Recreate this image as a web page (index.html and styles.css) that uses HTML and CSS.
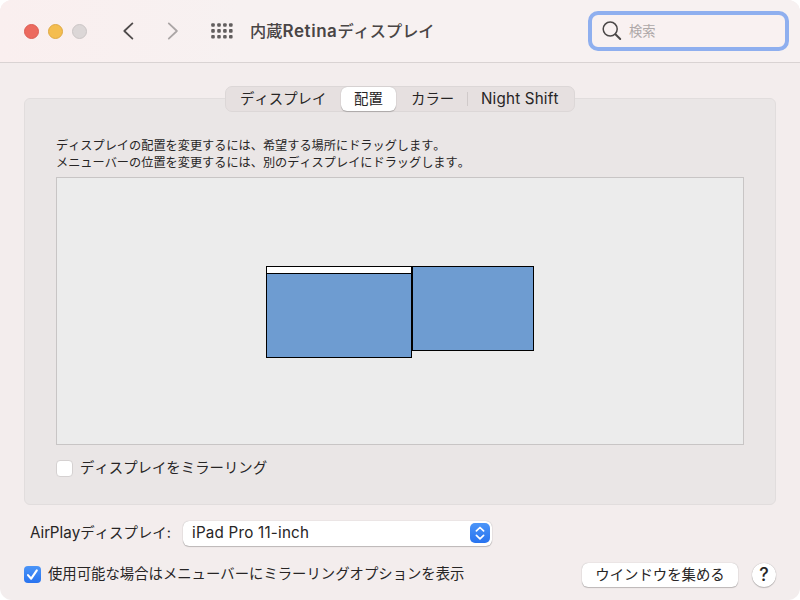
FILE: index.html
```html
<!DOCTYPE html>
<html lang="ja">
<head>
<meta charset="utf-8">
<title>内蔵Retinaディスプレイ</title>
<link rel="stylesheet" href="styles.css">
</head>
<body>
<div class="window">
  <header class="titlebar">
    <div class="lights"><i class="light red"></i><i class="light yellow"></i><i class="light gray"></i></div>
    <svg class="nav" width="60" height="22" viewBox="0 0 60 22" fill="none" stroke-width="1.8" stroke-linecap="round" stroke-linejoin="round"><path d="M10.4 3.4 L2.3 11 L10.4 18.6" stroke="#504c4c"/><path d="M46.8 3.4 L54.9 11 L46.8 18.6" stroke="#aba6a6"/></svg>
    <svg class="grid" width="22" height="16" viewBox="0 0 22 16" fill="#625e5e">
      <g id="row"><rect x="0.2" y="0.2" width="3.6" height="3.6" rx="1"/><rect x="6.2" y="0.2" width="3.6" height="3.6" rx="1"/><rect x="12.1" y="0.2" width="3.6" height="3.6" rx="1"/><rect x="18" y="0.2" width="3.6" height="3.6" rx="1"/></g>
      <use href="#row" y="5.9"/><use href="#row" y="11.8"/>
    </svg>
    <h1 class="title">内蔵<span class="latin">Retina</span>ディスプレイ</h1>
    <div class="search">
      <svg width="20" height="20" viewBox="0 0 20 20" fill="none" stroke="#4b4747" stroke-linecap="round"><circle cx="8.2" cy="8.1" r="7" stroke-width="1.5"/><path d="M13.4 13.3 L18.2 18" stroke-width="2"/></svg>
      <span>検索</span>
    </div>
  </header>

  <main class="content">
    <section class="panel">
      <nav class="tabs">
        <span class="tab first">ディスプレイ</span>
        <span class="tab active">配置</span>
        <span class="tab color">カラー</span>
        <i class="divider"></i>
        <span class="tab night">Night Shift</span>
      </nav>
      <p class="help">ディスプレイの配置を変更するには、希望する場所にドラッグします。<br>メニューバーの位置を変更するには、別のディスプレイにドラッグします。</p>
      <div class="arrangement">
        <div class="display main"><i class="menubar"></i></div>
        <div class="display second"></div>
      </div>
      <label class="check mirror"><i class="box"></i><span>ディスプレイをミラーリング</span></label>
    </section>

    <div class="airplay">
      <span class="airplay-label"><span class="latin">AirPlay</span>ディスプレイ:</span>
      <div class="select"><span class="value">iPad Pro 11-inch</span>
        <svg width="20" height="20" viewBox="0 0 20 20"><defs><linearGradient id="blue" x2="0" y2="1"><stop stop-color="#4b95f8"/><stop offset="1" stop-color="#2873ef"/></linearGradient></defs><rect width="20" height="20" rx="5" fill="url(#blue)"/><path d="M6.4 7.9 L10 4.5 L13.6 7.9 M6.4 12.4 L10 15.8 L13.6 12.4" fill="none" stroke="#fff" stroke-width="1.7" stroke-linecap="round" stroke-linejoin="round"/></svg>
      </div>
    </div>

    <footer class="footer">
      <label class="check option"><svg class="checked" width="17" height="17" viewBox="0 0 17 17"><rect width="17" height="17" rx="4" fill="url(#blue)"/><path d="M4 9.1 L7.2 12.7 L12.8 4.4" fill="none" stroke="#fff" stroke-width="2.1" stroke-linecap="round" stroke-linejoin="round"/></svg><span>使用可能な場合はメニューバーにミラーリングオプションを表示</span></label>
      <span class="button">ウインドウを集める</span>
      <span class="button help-button">?</span>
    </footer>
  </main>
</div>
</body>
</html>
```
FILE: styles.css
```css
* { box-sizing: border-box; }
body {
  margin: 0;
  background: #fff;
  color: #272525;
  font: 14.4px/20px Inter, "Noto Sans CJK JP", sans-serif;
  font-kerning: none;
  white-space: nowrap;
}
i { display: block; }
svg { display: block; flex: none; }
.window {
  width: 800px;
  height: 600px;
  border-radius: 12px;
  background: #f3eded;
  overflow: hidden;
}
.titlebar {
  display: flex;
  align-items: center;
  height: 63px;
  padding: 1px 11px 1px 23.5px;
  background: linear-gradient(90deg, #faefef, #f7f1f1 30%);
  border-bottom: 1px solid #d9d3d3;
}
.lights { display: flex; gap: 9px; }
.light { width: 15px; height: 15px; border-radius: 50%; border: 1px solid; }
.red { background: #ec6a5f; border-color: #dc5d54; }
.yellow { background: #f4bd4f; border-color: #dfa944; }
.gray { background: #dcd7d7; border-color: #cbc6c6; }
.nav { margin-left: 35px; }
.grid { margin-left: 29.5px; }
.title {
  margin: 0 0 0 17px;
  font-size: 16.2px;
  line-height: 24px;
  font-weight: 500;
  color: #494545;
}
.title .latin { font-size: 17px; font-weight: 600; letter-spacing: 0.55px; }
.search {
  display: flex;
  align-items: center;
  gap: 7px;
  width: 201px;
  height: 40px;
  margin-left: auto;
  padding-left: 10px;
  border: 4px solid #8fafef;
  border-radius: 10px;
  background: #f9f1f1;
  color: #aea8a8;
  font-size: 13.3px;
}
.content { padding: 35px 24px 0; }
.panel {
  display: flex;
  flex-direction: column;
  height: 407px;
  padding: 0 31px;
  background: #eae6e6;
  border: 1px solid #e1dddd;
  border-radius: 6px;
}
.tabs {
  display: flex;
  align-items: center;
  align-self: center;
  width: 350px;
  height: 26px;
  margin-top: -13px;
  background: #e6e0e0;
  border: 1px solid #dcd7d7;
  border-radius: 7px;
}
.first { width: 115px; padding-left: 14px; }
.active {
  width: 55px;
  height: 24px;
  line-height: 23px;
  text-align: center;
  background: #fff;
  border-radius: 6px;
  box-shadow: 0 0 1px #0004, 0 1px 1px #0003;
}
.color { margin-left: 15px; width: 56px; }
.divider { width: 1px; height: 14px; background: #d0caca; }
.night { margin-left: 13px; font-size: 15.2px; letter-spacing: 0.18px; }
.help { margin: 25px 0 0; font-size: 12.18px; line-height: 17px; }
.arrangement {
  display: flex;
  align-items: flex-start;
  height: 268px;
  margin-top: 6px;
  padding: 88px 0 0 209px;
  background: #ececec;
  border: 1px solid #c8c5c5;
}
.display { background: #6e9cd1; border: 1px solid #000; }
.main { width: 146px; height: 92px; }
.second { width: 122px; height: 85px; }
.menubar { height: 7px; background: #fff; border-bottom: 1px solid #000; }
.check { display: flex; align-items: center; gap: 7px; }
.mirror { margin-top: 13px; }
.box {
  width: 17px;
  height: 17px;
  background: #fff;
  border: 1px solid #d5d1d1;
  border-radius: 4px;
}
.airplay { display: flex; align-items: center; height: 26px; margin: 15px 0 0 6px; }
.airplay-label { width: 153px; }
.airplay .latin { font-size: 15.2px; }
.value { font-size: 15.2px; letter-spacing: 0.2px; }
.select {
  display: flex;
  align-items: center;
  justify-content: space-between;
  width: 309px;
  height: 25px;
  padding: 0 2px 0 9px;
  background: #fff;
  border-radius: 6px;
  box-shadow: 0 0 1px #0005, 0 1px 1px #0003;
}
.footer { display: flex; align-items: center; height: 26px; margin-top: 16px; }
.option { font-size: 14.37px; margin-bottom: 2px; }
.button {
  width: 156px;
  height: 24px;
  line-height: 23px;
  margin-left: auto;
  text-align: center;
  background: #fff;
  border-radius: 6px;
  box-shadow: 0 0 1px #0005, 0 1px 1px #0003;
}
.help-button {
  width: 24px;
  margin-left: 14px;
  border-radius: 50%;
  font-size: 18px;
  font-weight: 500;
  line-height: 24px;
}
```
